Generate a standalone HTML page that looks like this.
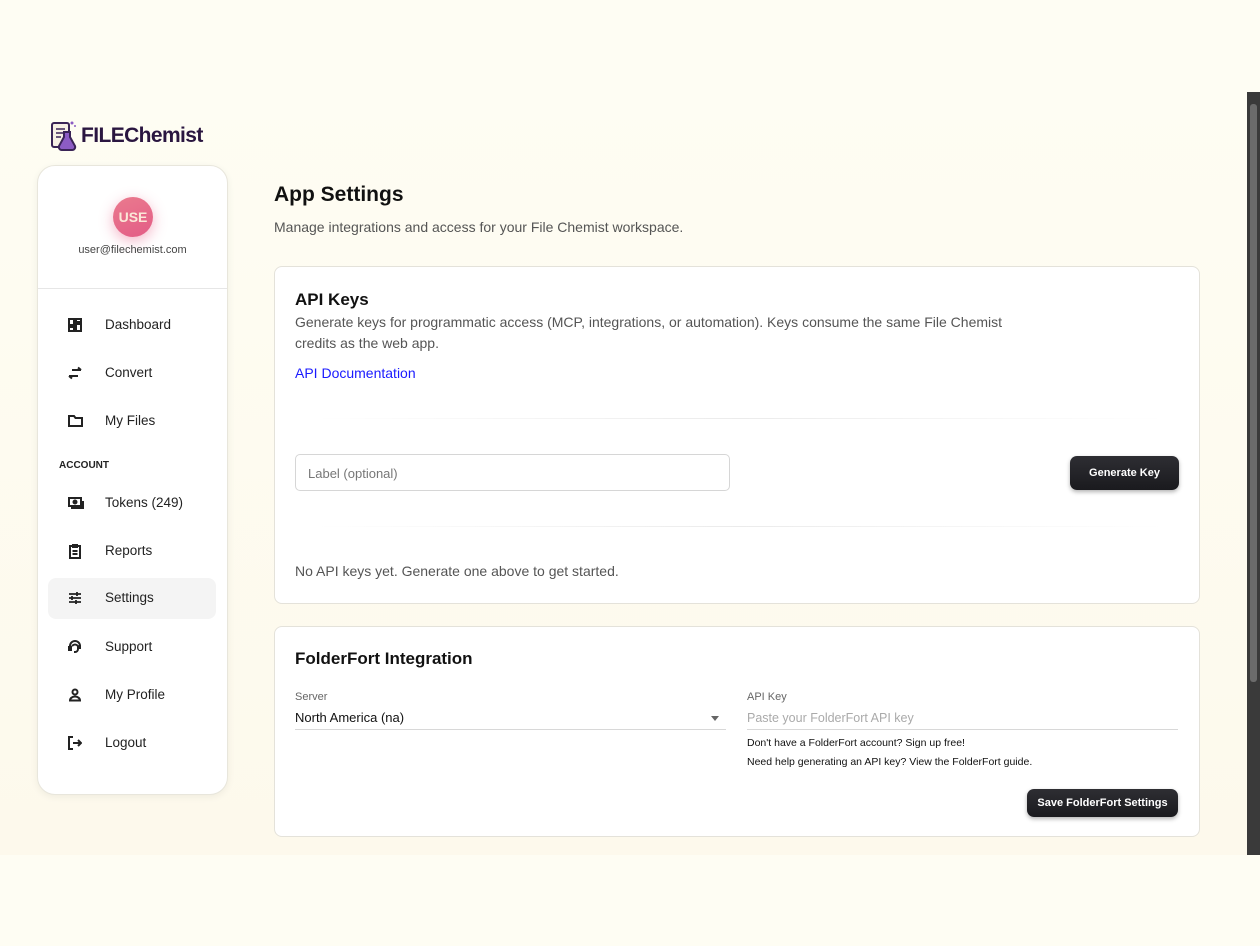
<!DOCTYPE html>
<html><head><meta charset="utf-8"><style>
*{box-sizing:border-box;margin:0;padding:0}
body{width:1260px;height:946px;background:#fefdf3;font-family:"Liberation Sans",sans-serif;position:relative;overflow:hidden;color:#111}
.page{position:absolute;left:0;top:92px;width:1247px;height:763px;background:linear-gradient(180deg,#fefdf3 0%,#fdf9ec 100%)}
.sb{position:absolute;left:1247px;top:92px;width:13px;height:763px;background:#3a3a3a}
.sb .th{position:absolute;left:3px;top:12px;width:7px;height:578px;background:#6b6b6b;border-radius:3px}
.logo{position:absolute;left:50px;top:120px;display:flex;align-items:center}
.logo span{font-weight:bold;font-size:21px;color:#2a1640;margin-left:3px;letter-spacing:-0.6px}
.side{position:absolute;left:37px;top:165px;width:191px;height:630px;background:#fff;border:1px solid #e8e6dc;border-radius:18px;box-shadow:0 2px 8px rgba(0,0,0,0.06)}
.av{position:absolute;left:75px;top:31px;width:40px;height:40px;border-radius:50%;background:linear-gradient(160deg,#ea7a8e,#e35d86);box-shadow:0 4px 14px rgba(230,90,130,0.45);color:#fbe8d8;font-weight:bold;font-size:14px;text-align:center;line-height:40px}
.em{position:absolute;left:0;width:100%;top:78px;text-align:center;font-size:11px;color:#444}
.hr{position:absolute;left:0;right:0;top:122px;border-top:1px solid #e6e6e6}
.it{position:absolute;left:10px;width:168px;height:41px;border-radius:8px;font-size:13.5px;color:#222}
.it svg{position:absolute;left:20px;top:13px}
.it b{font-weight:normal;position:absolute;left:57px;top:12px}
.it.act{background:#f4f4f4}
.acc{position:absolute;left:21px;top:294px;font-size:10px;font-weight:bold;color:#222}
h1{position:absolute;left:274px;top:183px;font-size:21px;font-weight:bold;color:#111}
.sub{position:absolute;left:274px;top:219px;font-size:14px;color:#555}
.card{position:absolute;left:274px;width:926px;background:#fff;border:1px solid #e4e2da;border-radius:8px}
.card h2{position:absolute;left:20px;font-size:17px;font-weight:bold}
.p{position:absolute;left:20px;font-size:14px;color:#555;line-height:21px}
.btn{position:absolute;background:linear-gradient(#2e2e33,#1a1a1e);color:#fff;font-weight:bold;font-size:11px;border-radius:7px;text-align:center;box-shadow:0 2px 4px rgba(0,0,0,0.3)}
.div{position:absolute;height:1px;background:linear-gradient(90deg,transparent,#ebebeb,transparent)}
.lab{position:absolute;font-size:11px;color:#666}
</style></head><body>
<div class="page"></div>
<div class="sb"><div class="th"></div></div>
<div class="logo">
<svg width="28" height="32" viewBox="0 0 28 32"><rect x="2" y="3" width="17" height="24" rx="2" fill="#f6efe4" stroke="#3a2456" stroke-width="2"/><path d="M6 9h9M6 13h7M6 17h5" stroke="#3a2456" stroke-width="1.5"/><path d="M14 12h6v5l5 9a3 3 0 01-3 4h-10a3 3 0 01-3-4l5-9z" fill="#8c5cc4" stroke="#3a2456" stroke-width="2"/><circle cx="22" cy="3" r="1.5" fill="#8c5cc4"/><circle cx="25" cy="6" r="1" fill="#8c5cc4"/></svg>
<span>FILEChemist</span></div>
<div class="side">
<div class="av">USE</div>
<div class="em">user@filechemist.com</div>
<div class="hr"></div>
<div class="it" style="top:139px"><svg width="14" height="14" viewBox="0 0 14 14" fill="none" stroke="#222" stroke-width="2"><rect x="1" y="1" width="5" height="6"/><rect x="8" y="1" width="5" height="3"/><rect x="1" y="9" width="5" height="4"/><rect x="8" y="6" width="5" height="7"/></svg><b>Dashboard</b></div>
<div class="it" style="top:187px"><svg width="14" height="14" viewBox="0 0 14 14" fill="none" stroke="#222" stroke-width="2"><path d="M4 4h9M10 1.5l3 2.5M10 10H1M4 12.5L1 10"/></svg><b>Convert</b></div>
<div class="it" style="top:235px"><svg width="15" height="14" viewBox="0 0 15 14" fill="none" stroke="#222" stroke-width="2"><path d="M1 2h5l1.5 2H14v8H1z"/></svg><b>My Files</b></div>
<div class="acc">ACCOUNT</div>
<div class="it" style="top:317px"><svg width="16" height="14" viewBox="0 0 16 14" fill="none" stroke="#222" stroke-width="2"><rect x="1" y="2" width="12" height="8"/><circle cx="7" cy="6" r="1.5" fill="#222"/><path d="M3 12h12V5"/></svg><b>Tokens (249)</b></div>
<div class="it" style="top:365px"><svg width="14" height="15" viewBox="0 0 14 15" fill="none" stroke="#222" stroke-width="2"><rect x="2" y="2" width="10" height="12"/><rect x="5" y="1" width="4" height="2" fill="#222"/><path d="M4.5 7h5M4.5 10h5"/></svg><b>Reports</b></div>
<div class="it act" style="top:412px"><svg width="14" height="14" viewBox="0 0 14 14" fill="none" stroke="#222" stroke-width="1.8"><path d="M1 3h12M1 7h12M1 11h12M9 1v4M4 5v4M8 9v4"/></svg><b>Settings</b></div>
<div class="it" style="top:461px"><svg width="14" height="14" viewBox="0 0 14 14" fill="none" stroke="#222" stroke-width="2"><path d="M2 9V6a5 5 0 0110 0v3M4 6q3-3 6 0v3a3 3 0 01-3 3H6"/><rect x="1" y="7" width="2" height="3" fill="#222"/></svg><b>Support</b></div>
<div class="it" style="top:509px"><svg width="14" height="14" viewBox="0 0 14 14" fill="none" stroke="#222" stroke-width="2"><circle cx="7" cy="4" r="2.5"/><path d="M2 12.5h10a5 4 0 00-10 0z"/></svg><b>My Profile</b></div>
<div class="it" style="top:557px"><svg width="14" height="14" viewBox="0 0 14 14" fill="none" stroke="#222" stroke-width="2"><path d="M5 1H1v12h4M5 7h8M10 4l3 3-3 3"/></svg><b>Logout</b></div>
</div>

<h1>App Settings</h1>
<div class="sub">Manage integrations and access for your File Chemist workspace.</div>

<div class="card" style="top:266px;height:338px">
<h2 style="top:23px">API Keys</h2>
<div class="p" style="top:45px;width:735px">Generate keys for programmatic access (MCP, integrations, or automation). Keys consume the same File Chemist credits as the web app.</div>
<div class="p" style="top:96px;color:#1a1aff">API Documentation</div>
<div class="div" style="left:40px;width:850px;top:151px"></div>
<div style="position:absolute;left:20px;top:187px;width:435px;height:37px;border:1px solid #d6d6d6;border-radius:5px;font-size:13px;color:#777;padding:11px 12px">Label (optional)</div>
<div class="btn" style="left:795px;top:189px;width:109px;height:34px;line-height:34px">Generate Key</div>
<div class="div" style="left:40px;width:850px;top:259px"></div>
<div class="p" style="top:294px">No API keys yet. Generate one above to get started.</div>
</div>

<div class="card" style="top:626px;height:211px">
<h2 style="top:22px">FolderFort Integration</h2>
<div class="lab" style="left:20px;top:64px">Server</div>
<div style="position:absolute;left:20px;top:83px;font-size:13px;color:#111">North America (na)</div>
<div style="position:absolute;left:436px;top:89px;border:4px solid transparent;border-top:5px solid #666"></div>
<div style="position:absolute;left:20px;top:102px;width:431px;border-top:1px solid #d8d8d8"></div>
<div class="lab" style="left:472px;top:64px">API Key</div>
<div style="position:absolute;left:472px;top:84px;font-size:12.5px;color:#aaa">Paste your FolderFort API key</div>
<div style="position:absolute;left:472px;top:102px;width:431px;border-top:1px solid #d8d8d8"></div>
<div style="position:absolute;left:472px;top:110px;font-size:10.5px;color:#111">Don't have a FolderFort account? Sign up free!</div>
<div style="position:absolute;left:472px;top:129px;font-size:10.5px;color:#111">Need help generating an API key? View the FolderFort guide.</div>
<div class="btn" style="left:752px;top:162px;width:151px;height:28px;line-height:28px">Save FolderFort Settings</div>
</div>
</body></html>
